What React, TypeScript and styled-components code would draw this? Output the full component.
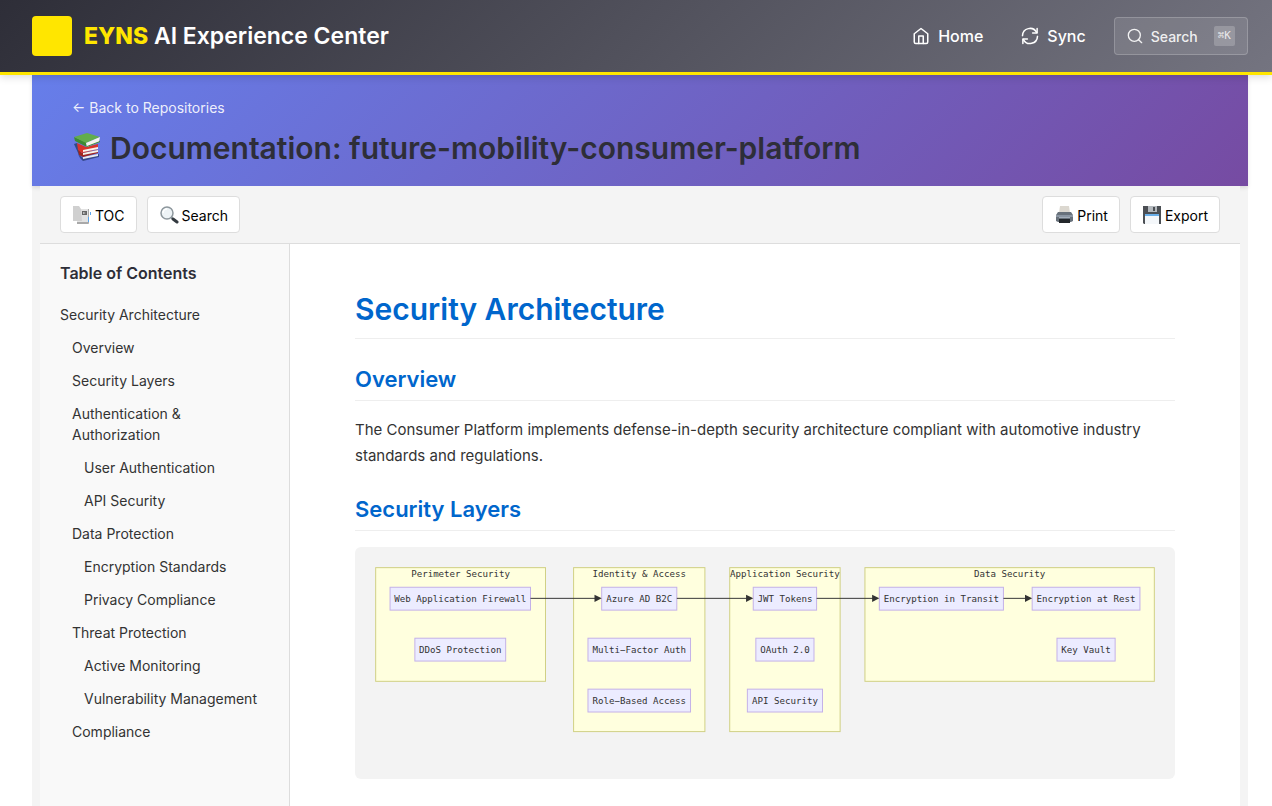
import React from 'react';
import styled, { createGlobalStyle } from 'styled-components';

const sans = `Inter, "Liberation Sans", sans-serif`;
const mono = `"DejaVu Sans Mono", "Liberation Mono", monospace`;

const GlobalStyle = createGlobalStyle`
  *, *::before, *::after { box-sizing: border-box; }
  body { margin: 0; background: #fff; color: #333; font-family: ${sans}; font-size: 16px; }
  a { color: inherit; text-decoration: none; }
  button { font-family: inherit; cursor: pointer; }
  h1, h2, p, ul { margin: 0; padding: 0; }
`;

const Page = styled.div`
  display: flex;
  flex-direction: column;
  height: 100vh;
  overflow: hidden;
`;

const TopBar = styled.header`
  position: relative;
  z-index: 1;
  flex: none;
  display: flex;
  align-items: center;
  justify-content: space-between;
  padding: 16px 24px 16px 32px;
  color: #fff;
  background: linear-gradient(135deg, #2e2e38 0%, #747480 100%);
  border-bottom: 3px solid #ffe600;
  box-shadow: 0 2px 8px rgba(0, 0, 0, 0.15);
`;

const Brand = styled.a`
  display: flex;
  align-items: center;
  gap: 12px;
  font-size: 23px;
  line-height: 40px;
  font-weight: 600;
`;

const BrandMark = styled.span`
  width: 40px;
  height: 40px;
  border-radius: 4px;
  background: #ffe600;
`;

const BrandAccent = styled.span`
  font-weight: 800;
  color: #ffe600;
`;

const TopNav = styled.nav`
  display: flex;
  align-items: center;
  gap: 6px;
`;

const NavLink = styled.a`
  display: flex;
  align-items: center;
  gap: 8px;
  padding: 8px 16px;
  line-height: 24px;
  font-weight: 500;
`;

const SearchButton = styled.button`
  display: flex;
  align-items: center;
  gap: 8px;
  height: 38px;
  margin-left: 6px;
  padding: 0 12px;
  color: rgba(255, 255, 255, 0.9);
  font-size: 14px;
  font-weight: 500;
  background: rgba(255, 255, 255, 0.1);
  border: 1px solid rgba(255, 255, 255, 0.2);
  border-radius: 4px;
`;

const Shortcut = styled.kbd`
  margin-left: 8px;
  padding: 0 4px;
  font-family: ${mono};
  font-size: 11px;
  line-height: 20px;
  color: rgba(255, 255, 255, 0.8);
  background: rgba(255, 255, 255, 0.2);
  border-radius: 2px;
`;

const Viewer = styled.div`
  flex: 1;
  min-height: 0;
  display: flex;
  flex-direction: column;
  margin: 0 24px 0 32px;
  background: #f4f4f4;
`;

const Banner = styled.section`
  flex: none;
  padding: 24px 40px 18px;
  background: linear-gradient(135deg, #667eea 0%, #764ba2 100%);
  box-shadow: 0 2px 4px rgba(0, 0, 0, 0.1);
`;

const BackLink = styled.a`
  display: block;
  font-size: 14px;
  line-height: 18px;
  color: rgba(255, 255, 255, 0.9);
`;

const BannerTitle = styled.h1`
  display: flex;
  align-items: center;
  gap: 8px;
  margin-top: 11px;
  font-size: 30px;
  line-height: 40px;
  font-weight: 600;
  color: #2e2e38;
`;

const Body = styled.div`
  position: relative;
  flex: 1;
  min-height: 0;
  display: flex;
  flex-direction: column;
  margin: 0 8px;
  background: #fff;
`;

const Toolbar = styled.div`
  flex: none;
  display: flex;
  justify-content: space-between;
  padding: 10px 20px;
  background: #f4f4f4;
  border-bottom: 1px solid #ddd;
`;

const ToolGroup = styled.div`
  display: flex;
  gap: 10px;
`;

const ToolButton = styled.button`
  display: flex;
  align-items: center;
  gap: 3px;
  height: 37px;
  padding: 1px 11px 0 12px;
  font-size: 14px;
  color: #000;
  background: #fff;
  border: 1px solid #ddd;
  border-radius: 4px;
`;

const Columns = styled.div`
  flex: 1;
  min-height: 0;
  display: flex;
`;

const Sidebar = styled.aside`
  flex: none;
  width: 250px;
  padding: 20px;
  background: #f9f9f9;
  border-right: 1px solid #ddd;
`;

const SidebarTitle = styled.h2`
  margin-bottom: 15px;
  font-size: 16px;
  line-height: 19px;
  font-weight: 600;
  color: #2e2e38;
`;

const TocList = styled.ul`
  display: flex;
  flex-direction: column;
  list-style: none;
`;

const TocItem = styled.li<{ $depth: number }>`
  padding: 6px 0 6px ${({ $depth }) => $depth * 12}px;
  font-size: 14px;
  line-height: 21px;
`;

const Content = styled.main`
  flex: 1;
  min-width: 0;
  overflow: hidden;
  padding: 40px 65px;
`;

const Heading = styled.h1`
  padding: 4px 0 8px;
  font-size: 30px;
  line-height: 42px;
  font-weight: 600;
  color: #0066cc;
  border-bottom: 1px solid #eee;
`;

const SubHeading = styled.h2`
  margin: 25px 0 16px;
  padding-bottom: 6px;
  font-size: 22px;
  line-height: 30px;
  font-weight: 600;
  color: #0066cc;
  border-bottom: 1px solid #eee;
`;

const Paragraph = styled.p`
  font-size: 15px;
  line-height: 26px;
`;

const Figure = styled.div`
  padding: 20px;
  background: #f3f3f3;
  border-radius: 6px;

  svg { display: block; width: 100%; height: auto; }
  text {
    font-family: ${mono};
    font-size: 14px;
    fill: #333;
    text-anchor: middle;
  }
`;

const HomeIcon = () => (
  <svg width="18" height="18" viewBox="0 0 24 24" fill="none" stroke="currentColor" strokeWidth="2" strokeLinecap="round" strokeLinejoin="round" aria-hidden="true">
    <path d="m3 9 9-7 9 7v11a2 2 0 0 1-2 2H5a2 2 0 0 1-2-2z" />
    <path d="M9 22V12h6v10" />
  </svg>
);

const SyncIcon = () => (
  <svg width="18" height="18" viewBox="0 0 24 24" fill="none" stroke="currentColor" strokeWidth="2" strokeLinecap="round" strokeLinejoin="round" aria-hidden="true">
    <path d="M21.500 2v6h-6M2.500 22v-6h6" />
    <path d="M2 11.500a10 10 0 0 1 18.800-4.300M22 12.500a10 10 0 0 1-18.800 4.200" />
  </svg>
);

const SearchIcon = () => (
  <svg width="16" height="16" viewBox="0 0 24 24" fill="none" stroke="currentColor" strokeWidth="2" strokeLinecap="round" strokeLinejoin="round" aria-hidden="true">
    <circle cx="11" cy="11" r="9" />
    <path d="m22 22-4.500-4.500" />
  </svg>
);

const BooksIcon = () => (
  <svg width="30" height="30" viewBox="0 0 30 30" aria-hidden="true">
    <path d="M2 11l3-1 4 10-2 2z" fill="#2f4a86" />
    <path d="M6 21l5 4 16-4v3L11 28l-3-3z" fill="#34478c" />
    <path d="M11 24l15-3v2l-15 3z" fill="#e8e9f0" />
    <path d="M6 17l4 3 16-3v3l-15 4-4-2z" fill="#9f251e" />
    <path d="M11 20l15-3v2l-15 3z" fill="#f4f1ec" />
    <path d="M5 10l9 4 12-3v5l-16 4-4-3z" fill="#d8342a" />
    <path d="M11 17l15-3v2l-15 3z" fill="#f7f3ee" />
    <path d="M2 4l12 5 1 5L3 8z" fill="#3c8a33" />
    <path d="M2 4L15 0l13 4-14 6z" fill="#62ad4d" />
    <path d="M14 10l14-6-1 5-12 5z" fill="#f4f4ee" />
    <path d="M15 13l13-5v1l-13 5z" fill="#3c8a33" />
  </svg>
);

const PagesIcon = () => (
  <svg width="19" height="18" viewBox="0 0 19 18" aria-hidden="true">
    <path d="M4 3h12v14a1 1 0 0 1-1 1H4z" fill="#a9a9a9" />
    <path d="M4 3h11v13H4z" fill="#e2e2e2" />
    <path d="M0 0h6l2 3 1 12H0z" fill="#d0d0d0" />
    <path d="M9 5h5v4H9z" fill="#666" />
    <path d="M10 6l3 1-3 1z" fill="#ccc" />
    <path d="M17 6h1v3h-1zM15 11h1v5h-1z" fill="#5aa5ee" />
  </svg>
);

const MagnifierIcon = () => (
  <svg width="19" height="18" viewBox="0 0 19 18" aria-hidden="true">
    <path d="M11 11l2 2" stroke="#8d979d" strokeWidth="2" />
    <path d="M13 13l4 3" stroke="#333a40" strokeWidth="3" strokeLinecap="round" />
    <circle cx="7" cy="7" r="6" fill="#edf3f6" stroke="#8d979d" strokeWidth="1.500" />
    <path d="M3 7a4 4 0 0 1 4-4" fill="none" stroke="#fff" strokeWidth="1.500" />
  </svg>
);

const PrinterIcon = () => (
  <svg width="19" height="18" viewBox="0 0 19 18" aria-hidden="true">
    <path d="M5 0h9l1 7H4z" fill="#dcd8d0" />
    <path d="M3 6h13l2 3v6l-2 1H3l-2-1V9z" fill="#68717b" />
    <path d="M1 9h17v2H1z" fill="#8b96a3" />
    <path d="M4 11h11v1H4z" fill="#a5afba" />
    <path d="M4 13h11v4H4z" fill="#23272b" />
  </svg>
);

const FloppyIcon = () => (
  <svg width="19" height="18" viewBox="0 0 19 18" aria-hidden="true">
    <path d="M0 0h18v18H1l-1-1z" fill="#4b4f54" />
    <path d="M5 0h9v6H5z" fill="#b4b9be" />
    <path d="M10 1h2v4h-2z" fill="#4b4f54" />
    <path d="M2 8h14v10H2z" fill="#f4f7fa" />
    <path d="M2 8h14v2H2z" fill="#69aee8" />
  </svg>
);

type Box = { label: string; x: number; y: number; w: number; h: number };

const clusters: Box[] = [
  { label: 'Perimeter Security', x: 1, y: 1, w: 260, h: 174 },
  { label: 'Identity & Access', x: 304, y: 1, w: 201, h: 251 },
  { label: 'Application Security', x: 543, y: 1, w: 169, h: 251 },
  { label: 'Data Security', x: 750, y: 1, w: 443, h: 174 },
];

const nodes: Box[] = [
  { label: 'Web Application Firewall', x: 23, y: 31, w: 215, h: 35 },
  { label: 'DDoS Protection', x: 61, y: 109, w: 139, h: 35 },
  { label: 'Azure AD B2C', x: 347, y: 31, w: 115, h: 35 },
  { label: 'Multi−Factor Auth', x: 326, y: 109, w: 157, h: 35 },
  { label: 'Role−Based Access', x: 326, y: 187, w: 157, h: 35 },
  { label: 'JWT Tokens', x: 579, y: 31, w: 97, h: 35 },
  { label: 'OAuth 2.0', x: 583, y: 109, w: 89, h: 35 },
  { label: 'API Security', x: 570, y: 187, w: 115, h: 35 },
  { label: 'Encryption in Transit', x: 772, y: 31, w: 190, h: 35 },
  { label: 'Encryption at Rest', x: 1006, y: 31, w: 165, h: 35 },
  { label: 'Key Vault', x: 1044, y: 109, w: 89, h: 35 },
];

const edges = [
  [238, 347],
  [462, 579],
  [676, 772],
  [962, 1006],
];

const SecurityDiagram = () => (
  <svg viewBox="0 0 1194 294" role="img" aria-label="Security layers">
    {clusters.map((c) => (
      <g key={c.label}>
        <rect x={c.x} y={c.y} width={c.w} height={c.h} fill="#ffffde" stroke="#cfcf82" strokeWidth="1.500" />
        <text x={c.x + c.w / 2} y="15">{c.label}</text>
      </g>
    ))}
    {nodes.map((n) => (
      <g key={n.label}>
        <rect x={n.x} y={n.y} width={n.w} height={n.h} fill="#ececff" stroke="#c3b0e8" strokeWidth="1.500" />
        <text x={n.x + n.w / 2} y={n.y + 22}>{n.label}</text>
      </g>
    ))}
    {edges.map(([from, to]) => (
      <g key={from}>
        <path d={`M${from} 48H${to - 8}`} stroke="#333" strokeWidth="1.500" />
        <path d={`M${to - 11} 42.500L${to} 48L${to - 11} 53.500z`} fill="#333" />
      </g>
    ))}
  </svg>
);

const toc = [
  { label: 'Security Architecture', depth: 0 },
  { label: 'Overview', depth: 1 },
  { label: 'Security Layers', depth: 1 },
  { label: 'Authentication & Authorization', depth: 1 },
  { label: 'User Authentication', depth: 2 },
  { label: 'API Security', depth: 2 },
  { label: 'Data Protection', depth: 1 },
  { label: 'Encryption Standards', depth: 2 },
  { label: 'Privacy Compliance', depth: 2 },
  { label: 'Threat Protection', depth: 1 },
  { label: 'Active Monitoring', depth: 2 },
  { label: 'Vulnerability Management', depth: 2 },
  { label: 'Compliance', depth: 1 },
];

export default function App() {
  return (
    <>
      <GlobalStyle />
      <Page>
        <TopBar>
          <Brand href="#">
            <BrandMark />
            <span><BrandAccent>EYNS</BrandAccent> AI Experience Center</span>
          </Brand>
          <TopNav>
            <NavLink href="#"><HomeIcon />Home</NavLink>
            <NavLink href="#"><SyncIcon />Sync</NavLink>
            <SearchButton type="button"><SearchIcon />Search<Shortcut>⌘K</Shortcut></SearchButton>
          </TopNav>
        </TopBar>
        <Viewer>
          <Banner>
            <BackLink href="#">← Back to Repositories</BackLink>
            <BannerTitle><BooksIcon />Documentation: future-mobility-consumer-platform</BannerTitle>
          </Banner>
          <Body>
            <Toolbar>
              <ToolGroup>
                <ToolButton type="button"><PagesIcon />TOC</ToolButton>
                <ToolButton type="button"><MagnifierIcon />Search</ToolButton>
              </ToolGroup>
              <ToolGroup>
                <ToolButton type="button"><PrinterIcon />Print</ToolButton>
                <ToolButton type="button"><FloppyIcon />Export</ToolButton>
              </ToolGroup>
            </Toolbar>
            <Columns>
              <Sidebar>
                <SidebarTitle>Table of Contents</SidebarTitle>
                <TocList>
                  {toc.map((t) => (
                    <TocItem key={t.label} $depth={t.depth}><a href="#">{t.label}</a></TocItem>
                  ))}
                </TocList>
              </Sidebar>
              <Content>
                <Heading>Security Architecture</Heading>
                <SubHeading>Overview</SubHeading>
                <Paragraph>
                  The Consumer Platform implements defense-in-depth security architecture compliant with automotive industry standards and regulations.
                </Paragraph>
                <SubHeading>Security Layers</SubHeading>
                <Figure><SecurityDiagram /></Figure>
              </Content>
            </Columns>
          </Body>
        </Viewer>
      </Page>
    </>
  );
}
